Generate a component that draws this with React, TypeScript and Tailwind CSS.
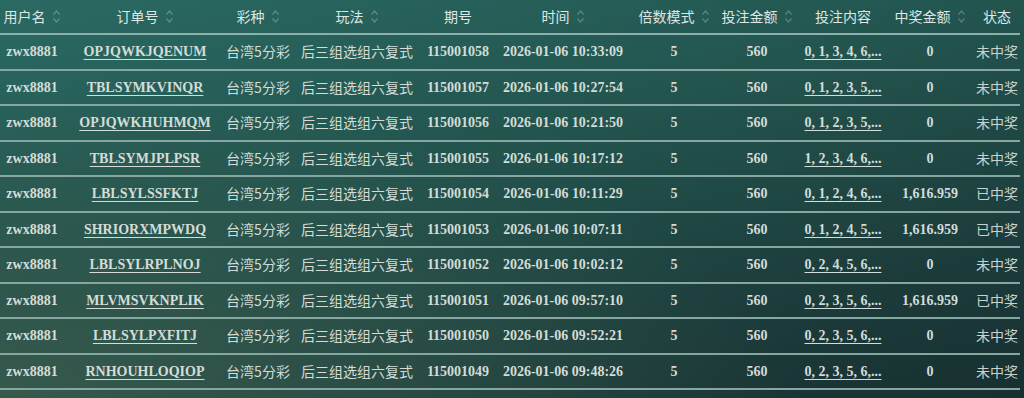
import React from "react";

type Row = {
  user: string;
  order: string;
  issue: string;
  time: string;
  content: string;
  win: string;
  status: string;
};

const rows: Row[] = [
  { user: "zwx8881", order: "OPJQWKJQENUM", issue: "115001058", time: "2026-01-06 10:33:09", content: "0, 1, 3, 4, 6,...", win: "0", status: "未中奖" },
  { user: "zwx8881", order: "TBLSYMKVINQR", issue: "115001057", time: "2026-01-06 10:27:54", content: "0, 1, 2, 3, 5,...", win: "0", status: "未中奖" },
  { user: "zwx8881", order: "OPJQWKHUHMQM", issue: "115001056", time: "2026-01-06 10:21:50", content: "0, 1, 2, 3, 5,...", win: "0", status: "未中奖" },
  { user: "zwx8881", order: "TBLSYMJPLPSR", issue: "115001055", time: "2026-01-06 10:17:12", content: "1, 2, 3, 4, 6,...", win: "0", status: "未中奖" },
  { user: "zwx8881", order: "LBLSYLSSFKTJ", issue: "115001054", time: "2026-01-06 10:11:29", content: "0, 1, 2, 4, 6,...", win: "1,616.959", status: "已中奖" },
  { user: "zwx8881", order: "SHRIORXMPWDQ", issue: "115001053", time: "2026-01-06 10:07:11", content: "0, 1, 2, 4, 5,...", win: "1,616.959", status: "已中奖" },
  { user: "zwx8881", order: "LBLSYLRPLNOJ", issue: "115001052", time: "2026-01-06 10:02:12", content: "0, 2, 4, 5, 6,...", win: "0", status: "未中奖" },
  { user: "zwx8881", order: "MLVMSVKNPLIK", issue: "115001051", time: "2026-01-06 09:57:10", content: "0, 2, 3, 5, 6,...", win: "1,616.959", status: "已中奖" },
  { user: "zwx8881", order: "LBLSYLPXFITJ", issue: "115001050", time: "2026-01-06 09:52:21", content: "0, 2, 3, 5, 6,...", win: "0", status: "未中奖" },
  { user: "zwx8881", order: "RNHOUHLOQIOP", issue: "115001049", time: "2026-01-06 09:48:26", content: "0, 2, 3, 5, 6,...", win: "0", status: "未中奖" },
];

const cols =
  "grid grid-cols-[64px_162px_64px_134px_68px_142px_80px_86px_86px_88px_46px]";

function SortIcon() {
  return (
    <svg width="9" height="15" viewBox="0 0 9 15" className="ml-[6px] opacity-30">
      <path d="M1.5 5.5 L4.5 2 L7.5 5.5" fill="none" stroke="#dfe8e4" strokeWidth="1.2" />
      <path d="M1.5 9.5 L4.5 13 L7.5 9.5" fill="none" stroke="#dfe8e4" strokeWidth="1.2" />
    </svg>
  );
}

function Head({ label, sort }: { label: string; sort?: boolean }) {
  return (
    <div className="flex items-center justify-center whitespace-nowrap">
      <span>{label}</span>
      {sort && <SortIcon />}
    </div>
  );
}

export default function App() {
  return (
    <div className="w-[1024px] h-[398px] overflow-hidden bg-[radial-gradient(ellipse_at_0%_100%,#36594c_0%,transparent_55%),linear-gradient(165deg,#2a6a63_0%,#23554f_40%,#1c3d3c_75%,#182f30_100%)]">
      <div className="w-[1020px]">
        {/* header */}
        <div
          className={`${cols} h-[35px] items-center border-b-2 border-[#8db0aa] text-[14px] text-[#dfe7e3] font-['Noto_Sans_CJK_SC',sans-serif]`}
        >
          <Head label="用户名" sort />
          <Head label="订单号" sort />
          <Head label="彩种" sort />
          <Head label="玩法" sort />
          <Head label="期号" />
          <Head label="时间" sort />
          <Head label="倍数模式" sort />
          <Head label="投注金额" sort />
          <Head label="投注内容" />
          <Head label="中奖金额" sort />
          <Head label="状态" />
        </div>

        {rows.map((r) => (
          <div
            key={r.order}
            className={`${cols} h-[35.5px] items-center border-b-2 border-[#86a6a1] text-center whitespace-nowrap text-[#d3dcd8] font-['Liberation_Serif',serif] font-bold text-[14px]`}
          >
            <div>{r.user}</div>
            <div className="underline underline-offset-[3px]">{r.order}</div>
            <div className="font-['Noto_Sans_CJK_SC',sans-serif] font-normal">台湾5分彩</div>
            <div className="font-['Noto_Sans_CJK_SC',sans-serif] font-normal">后三组选组六复式</div>
            <div>{r.issue}</div>
            <div>{r.time}</div>
            <div>5</div>
            <div>560</div>
            <div className="underline underline-offset-[3px]">{r.content}</div>
            <div>{r.win}</div>
            <div className="font-['Noto_Sans_CJK_SC',sans-serif] font-normal text-[#c9d2ce]">{r.status}</div>
          </div>
        ))}
      </div>
    </div>
  );
}
